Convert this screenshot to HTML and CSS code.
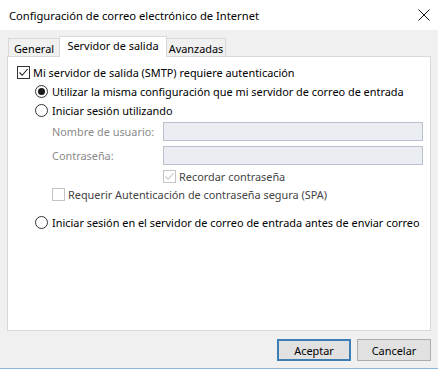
FILE: index.html
```html
<!DOCTYPE html>
<html lang="es">
<head>
<meta charset="utf-8">
<link rel="stylesheet" href="styles.css">
</head>
<body>
<div class="window">
  <div class="titlebar">
    <span class="title">Configuración de correo electrónico de Internet</span>
    <svg class="close" width="12" height="12" viewBox="0 0 12 12"><path d="M0.5 0.5 L11.5 11.5 M11.5 0.5 L0.5 11.5" stroke="#1a1a1a" stroke-width="1" fill="none"/></svg>
  </div>
  <div class="content">
    <div class="tabs">
      <div class="tab tab-general">General</div>
      <div class="tab tab-active">Servidor de salida</div>
      <div class="tab tab-adv">Avanzadas</div>
    </div>
    <div class="panel">
      <div class="row row1">
        <span class="check checked"><svg width="11" height="11" viewBox="0 0 11 11"><path d="M1.5 5.5 L4.2 8.3 L9.6 2" stroke="#222" stroke-width="1.1" fill="none"/></svg></span>
        <span class="label">Mi servidor de salida (SMTP) requiere autenticación</span>
      </div>
      <div class="row indent1">
        <span class="radio on"><span class="dot"></span></span>
        <span class="label">Utilizar la misma configuración que mi servidor de correo de entrada</span>
      </div>
      <div class="row indent1">
        <span class="radio"></span>
        <span class="label">Iniciar sesión utilizando</span>
      </div>
      <div class="row field f1">
        <span class="flabel">Nombre de usuario:</span>
        <span class="input"></span>
      </div>
      <div class="row field f2">
        <span class="flabel">Contraseña:</span>
        <span class="input"></span>
      </div>
      <div class="row remember">
        <span class="check disabled"><svg width="11" height="11" viewBox="0 0 11 11"><path d="M1.5 5.5 L4.2 8.3 L9.6 2" stroke="#c4c4c4" stroke-width="1.1" fill="none"/></svg></span>
        <span class="label dim">Recordar contraseña</span>
      </div>
      <div class="row spa">
        <span class="check disabled"></span>
        <span class="label dim">Requerir Autenticación de contraseña segura (SPA)</span>
      </div>
      <div class="row indent1 last">
        <span class="radio"></span>
        <span class="label">Iniciar sesión en el servidor de correo de entrada antes de enviar correo</span>
      </div>
    </div>
    <div class="buttons">
      <div class="btn default">Aceptar</div>
      <div class="btn">Cancelar</div>
    </div>
  </div>
</div>
</body>
</html>
```
FILE: styles.css
```css
* { box-sizing: border-box; }
html, body { margin: 0; padding: 0; }
body {
  width: 438px;
  height: 369px;
  background: #f0f0f0;
  font-family: "Segoe UI", "Noto Sans", "Open Sans", sans-serif;
  font-size: 10.9px;
  color: #000;
  overflow: hidden;
}
.window {
  width: 438px;
  height: 369px;
  background: #f0f0f0;
  border-bottom: 1px solid #8ab6df;
  display: flex;
  flex-direction: column;
}
.titlebar {
  height: 30px;
  background: #fff;
  display: flex;
  align-items: center;
  justify-content: space-between;
  padding: 0 8px 0 9px;
}
.title { font-size: 11.2px; color: #000; }
.content {
  padding: 6px 7px 0 7px;
  display: flex;
  flex-direction: column;
}
.tabs {
  height: 20px;
  display: flex;
  align-items: flex-end;
  padding-left: 1px;
  position: relative;
  z-index: 1;
}
.tab {
  height: 18px;
  border: 1px solid #d9d9d9;
  border-bottom: none;
  background: #f0f0f0;
  display: flex;
  align-items: center;
  justify-content: center;
  white-space: nowrap;
}
.tab-general { width: 51px; border-right: none; padding-top: 1px; }
.tab-active {
  width: 108px;
  height: 21px;
  margin-bottom: -1px;
  background: #fff;
  padding-bottom: 3px;
}
.tab-adv { width: 59px; border-left: none; padding-top: 1px; }
.panel {
  height: 275px;
  background: #fff;
  border: 1px solid #d9d9d9;
  padding: 6px 0 0 9px;
  display: flex;
  flex-direction: column;
}
.row {
  height: 19px;
  display: flex;
  align-items: center;
  gap: 3px;
}
.indent1 { padding-left: 18px; gap: 4px; }
.field { padding-left: 35px; height: 19px; gap: 0; }
.f1 { margin-top: 2px; }
.f2 { margin-top: 5px; }
.flabel { width: 111px; color: #8a8a8a; white-space: nowrap; }
.input {
  width: 260px;
  height: 19px;
  background: #eaedf1;
  border: 1px solid #b9c2cc;
}
.remember { padding-left: 146px; margin-top: 3px; height: 16px; }
.spa { padding-left: 35px; margin-top: 2px; height: 16px; }
.last { margin-top: 10px; height: 20px; }
.check {
  width: 13px;
  height: 13px;
  border: 1px solid #333;
  background: #fff;
  display: flex;
  align-items: center;
  justify-content: center;
  flex: none;
}
.check.disabled { border-color: #c4c4c4; }
.radio {
  width: 13px;
  height: 13px;
  border: 1px solid #333;
  border-radius: 50%;
  background: #fff;
  display: flex;
  align-items: center;
  justify-content: center;
  flex: none;
}
.dot {
  width: 7px;
  height: 7px;
  border-radius: 50%;
  background: #1a1a1a;
}
.label { white-space: nowrap; }
.dim { color: #444; }
.buttons {
  display: flex;
  justify-content: flex-end;
  gap: 6px;
  margin-top: 8px;
}
.btn {
  width: 74px;
  height: 22px;
  background: #e1e1e1;
  border: 1px solid #adadad;
  display: flex;
  align-items: center;
  justify-content: center;
}
.btn.default { border: 2px solid #3d7fb5; }
```
